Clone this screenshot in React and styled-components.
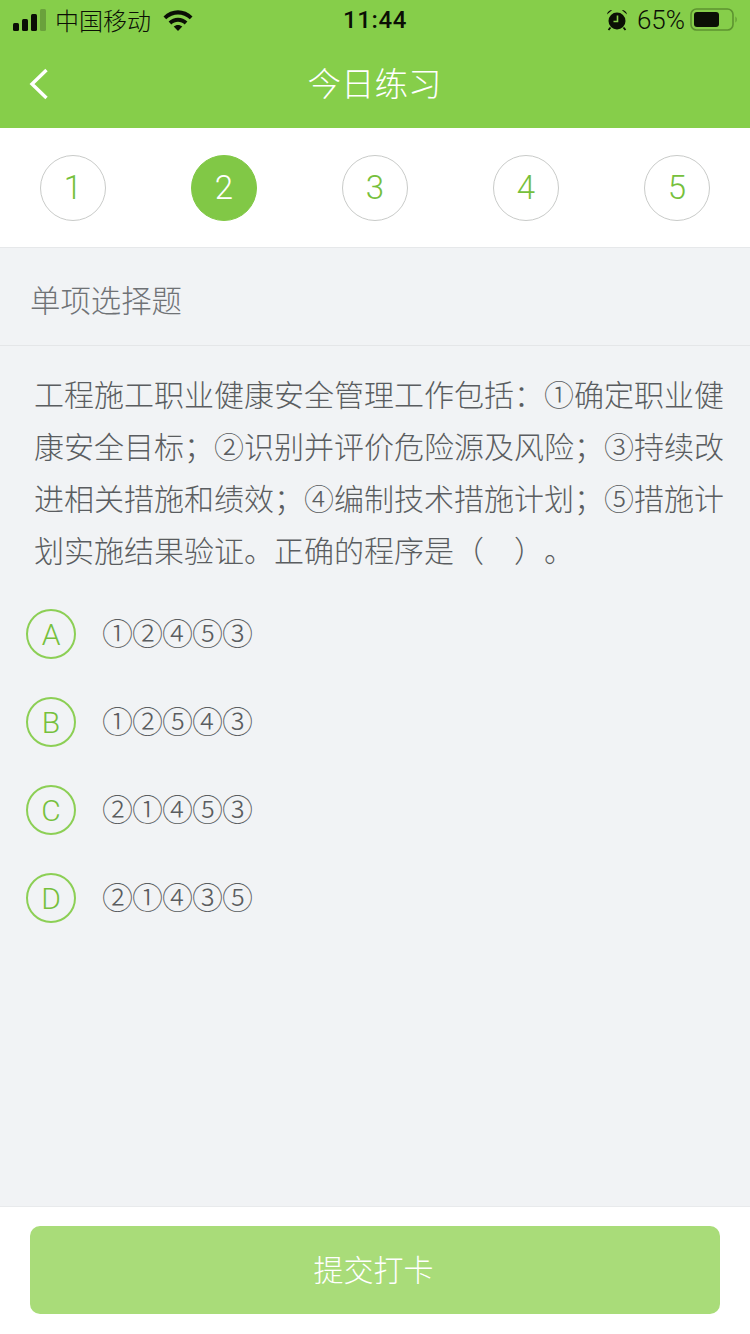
import React from "react";
import styled, { createGlobalStyle } from "styled-components";

const CJK = `"Noto Sans CJK SC", "Noto Sans", sans-serif`;
const LATIN = `Roboto, "Noto Sans CJK SC", sans-serif`;

const GlobalStyle = createGlobalStyle`
  html, body {
    margin: 0;
    padding: 0;
    background: #f1f3f5;
  }
  * {
    box-sizing: border-box;
  }
`;

const Page = styled.div`
  width: 750px;
  height: 1334px;
  display: flex;
  flex-direction: column;
  background: #f1f3f5;
  font-family: ${CJK};
  text-spacing-trim: space-all;
  overflow: hidden;
`;

const Header = styled.header`
  height: 128px;
  background: #86ce4a;
  flex-shrink: 0;
`;

const StatusBar = styled.div`
  height: 40px;
  padding: 0 12px 0 13px;
  display: grid;
  grid-template-columns: 1fr auto 1fr;
  align-items: center;
  color: #0b0f05;
`;

const StatusLeft = styled.div`
  display: flex;
  align-items: center;
  font-size: 24px;
  font-weight: 300;
`;

const Carrier = styled.span`
  margin: 0 12px 0 8px;
  line-height: 40px;
`;

const Time = styled.div`
  font-family: ${LATIN};
  font-size: 24px;
  font-weight: 500;
  letter-spacing: 0.6px;
  margin-left: -1px;
`;

const StatusRight = styled.div`
  display: flex;
  align-items: center;
  justify-content: flex-end;
  font-family: ${LATIN};
  font-size: 26px;
  font-weight: 300;
`;

const Percent = styled.span`
  margin: 0 5px 0 9px;
`;

const NavBar = styled.div`
  height: 88px;
  display: grid;
  grid-template-columns: 100px 1fr 100px;
  align-items: center;
  padding-bottom: 1px;
`;

const BackButton = styled.div`
  padding-left: 28px;
  display: flex;
  align-items: center;
`;

const Title = styled.h1`
  margin: -4px 0 0 -1px;
  text-align: center;
  color: #fff;
  font-size: 33.5px;
  font-weight: 300;
`;

const Steps = styled.div`
  height: 120px;
  flex-shrink: 0;
  padding: 0 40px;
  display: flex;
  align-items: center;
  justify-content: space-between;
  background: #fff;
  border-bottom: 1px solid #e6e8ea;
`;

const Step = styled.div`
  width: 66px;
  height: 66px;
  border-radius: 50%;
  display: flex;
  align-items: center;
  justify-content: center;
  font-family: ${LATIN};
  font-size: 33px;
  font-weight: 300;
  color: ${(p) => (p.$active ? "#fff" : "#76c03c")};
  background: ${(p) => (p.$active ? "#81c846" : "#fff")};
  border: 1px solid ${(p) => (p.$active ? "#81c846" : "#c9cbc9")};
`;

const SectionLabel = styled.div`
  height: 98px;
  flex-shrink: 0;
  padding: 5px 0 0 30px;
  display: flex;
  align-items: center;
  font-size: 30.4px;
  font-weight: 300;
  color: #6f7275;
  border-bottom: 1px solid #e4e6e8;
`;

const Body = styled.div`
  flex: 1;
  padding: 21px 20px 0 34px;
`;

const Question = styled.p`
  margin: 0;
  font-size: 30px;
  font-weight: 300;
  line-height: 52px;
  color: #5a5d60;
`;

const Options = styled.ul`
  list-style: none;
  margin: 34px 0 0 -8px;
  padding: 0;
  display: flex;
  flex-direction: column;
  gap: 38px;
`;

const Option = styled.li`
  display: flex;
  align-items: center;
  gap: 26px;
  height: 50px;
`;

const Letter = styled.span`
  width: 50px;
  height: 50px;
  border-radius: 50%;
  border: 2px solid #8ccf55;
  display: flex;
  align-items: center;
  justify-content: center;
  font-family: ${LATIN};
  font-size: 30px;
  font-weight: 300;
  color: #76c03c;
`;

const OptionText = styled.span`
  margin-bottom: 4px;
  font-size: 31px;
  letter-spacing: -1px;
  font-weight: 300;
  line-height: 50px;
  color: #5a5d60;
`;

const Footer = styled.footer`
  height: 128px;
  flex-shrink: 0;
  padding: 19px 30px 0;
  background: #fff;
  border-top: 1px solid #e8eaec;
`;

const Submit = styled.button`
  width: 100%;
  height: 88px;
  border: 0;
  border-radius: 10px;
  padding: 0 3px 4px 0;
  background: #a9dc79;
  color: #fff;
  font-family: ${CJK};
  font-size: 30px;
  font-weight: 300;
`;

const SignalIcon = () => (
  <svg width="34" height="22" viewBox="0 0 34 22">
    <rect x="0" y="14" width="6" height="8" rx="1.5" fill="#0b0f05" />
    <rect x="9" y="10" width="6" height="12" rx="1.5" fill="#0b0f05" />
    <rect x="18" y="5" width="6" height="17" rx="1.5" fill="#0b0f05" />
    <rect x="27" y="0" width="6" height="22" rx="1.5" fill="#6aa13c" />
  </svg>
);

const WifiIcon = () => (
  <svg width="30" height="22" viewBox="0 0 30 22">
    <path d="M0.5 7.5C8.5 -0.8 21.5 -0.8 29.5 7.5L26.8 10.3C20.3 3.8 9.7 3.8 3.2 10.3Z" fill="#0b0f05" />
    <path d="M5.6 12.6C10.8 7.4 19.2 7.4 24.4 12.6L21.7 15.4C18 11.8 12 11.8 8.3 15.4Z" fill="#0b0f05" />
    <path d="M10.7 17.6C13.1 15.3 16.9 15.3 19.3 17.6L15 22Z" fill="#0b0f05" />
  </svg>
);

const AlarmIcon = () => (
  <svg width="22" height="22" viewBox="0 0 22 22">
    <circle cx="11" cy="12" r="8.5" fill="#0b0f05" />
    <path d="M1 5.5C1.5 2.5 3.5 1 6.2 1ZM21 5.5C20.5 2.5 18.5 1 15.8 1Z" fill="#0b0f05" />
    <path d="M4.5 18.5L2.5 21M17.5 18.5L19.5 21" stroke="#0b0f05" strokeWidth="1.8" />
    <path d="M11.5 6.5V12.5H7.5" fill="none" stroke="#86ce4a" strokeWidth="1.6" />
  </svg>
);

const BatteryIcon = () => (
  <svg width="48" height="24" viewBox="0 0 48 24">
    <rect x="1" y="1" width="42" height="21" rx="5.5" fill="none" stroke="#5d9330" strokeWidth="1.6" />
    <rect x="4" y="4" width="25" height="15" rx="3" fill="#0b0f05" />
    <path d="M45.5 8.5C47 9.5 47 13.5 45.5 14.5Z" fill="#5d9330" />
  </svg>
);

const BackIcon = () => (
  <svg width="22" height="34" viewBox="0 0 22 34">
    <path d="M18.5 3L4 17L18.5 31" fill="none" stroke="#fff" strokeWidth="3.4" />
  </svg>
);

const steps = [1, 2, 3, 4, 5];

const options = [
  { key: "A", text: "①②④⑤③" },
  { key: "B", text: "①②⑤④③" },
  { key: "C", text: "②①④⑤③" },
  { key: "D", text: "②①④③⑤" },
];

export default function App() {
  return (
    <Page>
      <GlobalStyle />
      <Header>
        <StatusBar>
          <StatusLeft>
            <SignalIcon />
            <Carrier>中国移动</Carrier>
            <WifiIcon />
          </StatusLeft>
          <Time>11:44</Time>
          <StatusRight>
            <AlarmIcon />
            <Percent>65%</Percent>
            <BatteryIcon />
          </StatusRight>
        </StatusBar>
        <NavBar>
          <BackButton>
            <BackIcon />
          </BackButton>
          <Title>今日练习</Title>
        </NavBar>
      </Header>
      <Steps>
        {steps.map((n) => (
          <Step key={n} $active={n === 2}>
            {n}
          </Step>
        ))}
      </Steps>
      <SectionLabel>单项选择题</SectionLabel>
      <Body>
        <Question>
          工程施工职业健康安全管理工作包括：①确定职业健康安全目标；②识别并评价危险源及风险；③持续改进相关措施和绩效；④编制技术措施计划；⑤措施计划实施结果验证。正确的程序是（　）。
        </Question>
        <Options>
          {options.map((o) => (
            <Option key={o.key}>
              <Letter>{o.key}</Letter>
              <OptionText>{o.text}</OptionText>
            </Option>
          ))}
        </Options>
      </Body>
      <Footer>
        <Submit>提交打卡</Submit>
      </Footer>
    </Page>
  );
}
